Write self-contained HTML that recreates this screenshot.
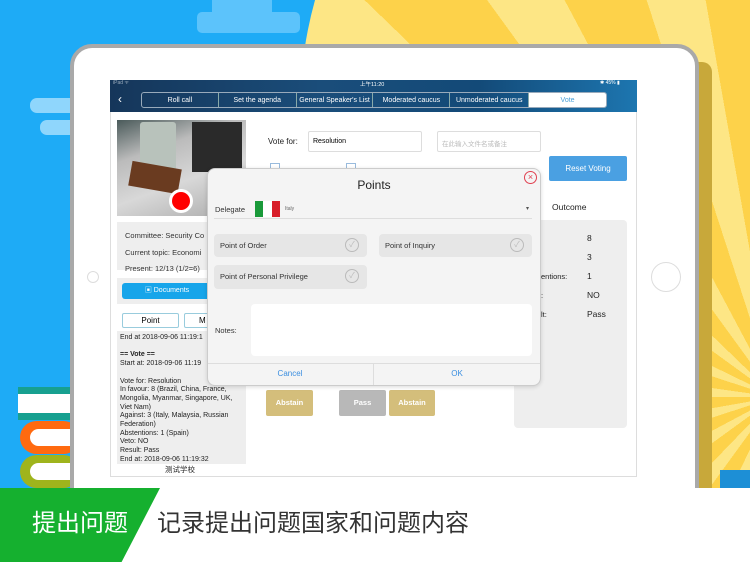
<!DOCTYPE html>
<html><head><meta charset="utf-8"><style>
*{margin:0;padding:0;box-sizing:border-box}
body{width:750px;height:562px;overflow:hidden;position:relative;font-family:"Liberation Sans","Noto Sans CJK SC",sans-serif;background:#1eabf6}
.a{position:absolute}
.sun{left:300px;top:-300px;width:820px;height:820px;border-radius:50%;background:repeating-conic-gradient(from 0deg at 58% 85%,#fde685 0deg 8deg,#fdd24a 8deg 18deg)}
.t{font-size:7px;color:#fff;text-align:center;line-height:15px;border-right:1px solid #8aa;}
.lbl{font-size:7.5px;color:#333}
.pbtn{background:#e6e6e6;border-radius:4px;font-size:7.5px;color:#333;line-height:23px;padding-left:6px}
.chk{position:absolute;right:8px;top:4px;width:14px;height:14px;border:1px solid #bbb;border-radius:50%;font-size:8px;color:#bbb;line-height:12px;text-align:center}
.gb{font-size:7.5px;color:#fff;font-weight:bold;text-align:center;line-height:26px;border-radius:2px}
</style></head><body>
<div class="a sun"></div>
<div class="a" style="left:720px;top:470px;width:40px;height:30px;background:#1d8fd6"></div>
<div class="a" style="left:212px;top:0;width:60px;height:16px;background:#5cc3fb"></div>
<div class="a" style="left:197px;top:12px;width:103px;height:21px;background:#5cc3fb;border-radius:5px"></div>
<div class="a" style="left:30px;top:98px;width:50px;height:15px;background:#8fd6fc;border-radius:7px"></div>
<div class="a" style="left:40px;top:120px;width:40px;height:15px;background:#8fd6fc;border-radius:7px"></div>
<!-- books -->
<div class="a" style="left:18px;top:387px;width:55px;height:33px;background:#17a090"></div>
<div class="a" style="left:18px;top:394px;width:55px;height:19px;background:#fff"></div>
<div class="a" style="left:20px;top:421px;width:60px;height:33px;background:#ff6a10;border-radius:17px"></div>
<div class="a" style="left:30px;top:429px;width:50px;height:17px;background:#fff;border-radius:9px"></div>
<div class="a" style="left:20px;top:455px;width:60px;height:33px;background:#9fb41c;border-radius:17px"></div>
<div class="a" style="left:30px;top:463px;width:50px;height:17px;background:#fff;border-radius:9px"></div>
<!-- ipad -->
<div class="a" style="left:698px;top:62px;width:14px;height:430px;background:#c8a83a;border-radius:0 10px 0 0"></div>
<div class="a" style="left:70px;top:44px;width:629px;height:470px;background:#fff;border:4px solid #a9a9a9;border-radius:22px"></div>
<div class="a" style="left:87px;top:271px;width:12px;height:12px;border:1px solid #ddd;border-radius:50%"></div>
<div class="a" style="left:651px;top:262px;width:30px;height:30px;border:1px solid #ddd;border-radius:50%"></div>
<!-- screen -->
<div class="a" style="left:110px;top:80px;width:527px;height:397px;border:1px solid #ddd;background:#fff"></div>
<div class="a" style="left:110px;top:80px;width:527px;height:32px;background:linear-gradient(90deg,#15365a,#1a4d7a 40%,#134a78 70%,#1d76b0)"></div>
<div class="a" style="left:113px;top:80px;font-size:5px;color:#9ab">iPad ᯤ</div>
<div class="a" style="left:360px;top:80px;font-size:5.5px;color:#fff">上午11:20</div>
<div class="a" style="left:600px;top:80px;font-size:5px;color:#fff">✱ 45% ▮</div>
<div class="a" style="left:118px;top:91px;font-size:12px;color:#fff;line-height:16px">‹</div>
<div class="a" style="left:141px;top:92px;width:466px;height:16px;border:1px solid #9ab;border-radius:3px;display:flex;overflow:hidden">
<div class="t" style="width:77px">Roll call</div><div class="t" style="width:78px">Set the agenda</div><div class="t" style="width:77px">General Speaker's List</div><div class="t" style="width:77px">Moderated caucus</div><div class="t" style="width:79px">Unmoderated caucus</div><div class="t" style="width:77px;background:#fff;color:#4aa0d8;border:none">Vote</div></div>
<!-- photo -->
<div class="a" style="left:117px;top:120px;width:129px;height:96px;background:linear-gradient(160deg,#4a5a5a,#bbb 30%,#d8d8d8 60%,#aaa)"></div>
<div class="a" style="left:140px;top:122px;width:36px;height:55px;background:#b8c2bb;border-radius:3px 3px 8px 8px"></div>
<div class="a" style="left:130px;top:165px;width:50px;height:25px;background:#6a3b20;transform:rotate(10deg)"></div>
<div class="a" style="left:192px;top:122px;width:50px;height:50px;background:#2a2a2a"></div>
<div class="a" style="left:169px;top:189px;width:24px;height:24px;border-radius:50%;background:#fff"></div>
<div class="a" style="left:172px;top:192px;width:18px;height:18px;border-radius:50%;background:#f00"></div>
<div class="a" style="left:117px;top:222px;width:129px;height:48px;background:#eee"></div>
<div class="a lbl" style="left:125px;top:228px;line-height:16.5px">Committee: Security Co<br>Current topic: Economi<br>Present: 12/13 (1/2=6)</div>
<div class="a" style="left:117px;top:278px;width:129px;height:26px;background:#eee"></div>
<div class="a" style="left:122px;top:283px;width:90px;height:16px;background:#17a5ea;border-radius:3px;color:#fff;font-size:7px;line-height:16px;text-align:center">▣ Documents</div>
<div class="a" style="left:122px;top:313px;width:57px;height:15px;border:1px solid #9cd;border-radius:2px;font-size:8px;text-align:center;line-height:13px">Point</div>
<div class="a" style="left:184px;top:313px;width:30px;height:15px;border:1px solid #9cd;border-radius:2px;font-size:8px;padding-left:14px;line-height:13px">M</div>
<div class="a" style="left:117px;top:331px;width:129px;height:133px;background:#eee"></div>
<div class="a" style="left:120px;top:334px;font-size:7px;color:#222;line-height:8.7px">End at 2018-09-06 11:19:1<br><br><b>== Vote ==</b><br>Start at: 2018-09-06 11:19<br><br>Vote for: Resolution<br>In favour: 8 (Brazil, China, France,<br>Mongolia, Myanmar, Singapore, UK,<br>Viet Nam)<br>Against: 3 (Italy, Malaysia, Russian<br>Federation)<br>Abstentions: 1 (Spain)<br>Veto: NO<br>Result: Pass<br>End at: 2018-09-06 11:19:32</div>
<div class="a" style="left:165px;top:464px;font-size:7.5px;color:#222">测试学校</div>
<!-- right content -->
<div class="a" style="left:268px;top:137px;font-size:8px;color:#222">Vote for:</div>
<div class="a" style="left:308px;top:131px;width:114px;height:21px;border:1px solid #ddd;border-radius:2px;font-size:7px;padding:6px 4px">Resolution</div>
<div class="a" style="left:437px;top:131px;width:104px;height:21px;border:1px solid #ddd;border-radius:2px;font-size:6.5px;color:#bbb;padding:6px 4px">在此输入文件名或备注</div>
<div class="a" style="left:549px;top:156px;width:78px;height:25px;background:#4aa0e2;border-radius:2px;color:#fff;font-size:8px;text-align:center;line-height:25px">Reset Voting</div>
<div class="a" style="left:552px;top:202px;font-size:8.5px;color:#222">Outcome</div>
<div class="a" style="left:514px;top:220px;width:113px;height:208px;background:#eee;border-radius:4px"></div>
<div class="a" style="left:587px;top:229px;font-size:8.5px;color:#222;line-height:19px">8<br>3<br>1<br>NO<br>Pass</div>
<div class="a" style="left:541px;top:267px;font-size:7.5px;color:#222;line-height:19px">entions:<br>:<br>lt:</div>
<div class="a" style="left:270px;top:163px;width:10px;height:10px;border:1px solid #9bd"></div>
<div class="a" style="left:346px;top:163px;width:10px;height:10px;border:1px solid #9bd"></div>
<div class="a gb" style="left:266px;top:390px;width:47px;height:26px;background:#d4be7b">Abstain</div>
<div class="a gb" style="left:339px;top:390px;width:47px;height:26px;background:#b8b8b8">Pass</div>
<div class="a gb" style="left:389px;top:390px;width:46px;height:26px;background:#d4be7b">Abstain</div>
<!-- modal -->
<div class="a" style="left:207px;top:168px;width:334px;height:218px;background:#f4f4f4;border:1px solid #ccc;border-radius:8px;box-shadow:0 1px 4px rgba(0,0,0,.15)"></div>
<div class="a" style="left:207px;top:178px;width:334px;text-align:center;font-size:12px;color:#222">Points</div>
<div class="a" style="left:524px;top:171px;width:13px;height:13px;border:1px solid #e04050;border-radius:50%;color:#e04050;font-size:9px;text-align:center;line-height:11px">×</div>
<div class="a" style="left:215px;top:205px;font-size:7.5px;color:#333">Delegate</div>
<div class="a" style="left:255px;top:201px;width:8px;height:16px;background:#1a9a3a"></div>
<div class="a" style="left:263px;top:201px;width:9px;height:16px;background:#fff"></div>
<div class="a" style="left:272px;top:201px;width:8px;height:16px;background:#d81e2a"></div>
<div class="a" style="left:285px;top:206px;font-size:5px;color:#666">Italy</div>
<div class="a" style="left:526px;top:205px;font-size:6px;color:#555">▾</div>
<div class="a" style="left:214px;top:218px;width:318px;height:1px;background:#ddd"></div>
<div class="a pbtn" style="left:214px;top:234px;width:153px;height:23px">Point of Order<span class="chk">✓</span></div>
<div class="a pbtn" style="left:379px;top:234px;width:153px;height:23px">Point of Inquiry<span class="chk">✓</span></div>
<div class="a pbtn" style="left:214px;top:265px;width:153px;height:24px">Point of Personal Privilege<span class="chk">✓</span></div>
<div class="a" style="left:215px;top:326px;font-size:7.5px;color:#333">Notes:</div>
<div class="a" style="left:251px;top:304px;width:281px;height:52px;background:#fff;border-radius:4px"></div>
<div class="a" style="left:208px;top:363px;width:332px;height:1px;background:#ddd"></div>
<div class="a" style="left:373px;top:363px;width:1px;height:22px;background:#ddd"></div>
<div class="a" style="left:207px;top:369px;width:166px;text-align:center;font-size:8px;color:#3a8ee0">Cancel</div>
<div class="a" style="left:374px;top:369px;width:166px;text-align:center;font-size:8px;color:#3a8ee0">OK</div>
<!-- bottom band -->
<div class="a" style="left:0;top:488px;width:750px;height:74px;background:#fff"></div>
<div class="a" style="left:0;top:488px;width:160px;height:74px;background:#15b02f;clip-path:polygon(0 0,100% 0,76% 100%,0 100%)"></div>
<div class="a" style="left:32px;top:509px;font-size:24px;color:#fff;line-height:30px">提出问题</div>
<div class="a" style="left:157px;top:509px;font-size:24px;color:#333;line-height:30px">记录提出问题国家和问题内容</div>
</body></html>
